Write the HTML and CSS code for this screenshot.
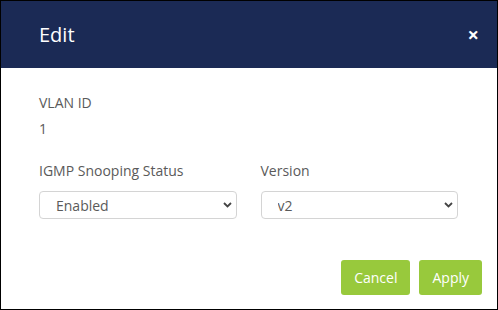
FILE: index.html
```html
<!DOCTYPE html>
<html lang="en">
<head>
    <meta charset="UTF-8">
    <link rel="stylesheet" href="styles.css">
    <title>Edit</title>
</head>
<body>
    <div class="modal">
        <div class="modal-header">
            <h2 class="modal-title">Edit</h2>
            <span class="close-button">&times;</span>
        </div>
        <div class="modal-body">
            <div class="field">
                <label>VLAN ID</label>
                <div class="value">1</div>
            </div>
            <div class="row">
                <div class="field">
                    <label for="igmp_status">IGMP Snooping Status</label>
                    <div class="select-wrap">
                        <select id="igmp_status">
                            <option>Enabled</option>
                            <option>Disabled</option>
                        </select>
                        <svg class="chevron" width="9" height="6" viewBox="0 0 9 6"><path d="M1 1l3.5 3.5L8 1" fill="none" stroke="#444" stroke-width="1.8"/></svg>
                    </div>
                </div>
                <div class="field">
                    <label for="igmp_version">Version</label>
                    <div class="select-wrap">
                        <select id="igmp_version">
                            <option>v2</option>
                            <option>v3</option>
                        </select>
                        <svg class="chevron" width="9" height="6" viewBox="0 0 9 6"><path d="M1 1l3.5 3.5L8 1" fill="none" stroke="#444" stroke-width="1.8"/></svg>
                    </div>
                </div>
            </div>
        </div>
        <div class="modal-footer">
            <button type="button">Cancel</button>
            <button type="button">Apply</button>
        </div>
    </div>
</body>
</html>
```

FILE: styles.css
```css
body {
    margin: 0;
    font-family: "Open Sans", Arial, sans-serif;
    background-color: #fff;
}
.modal {
    width: 498px;
    height: 310px;
    box-sizing: border-box;
    border: 1px solid #000;
    background-color: #fff;
}
.modal-header {
    height: 67px;
    background-color: #1b2a55;
    display: flex;
    align-items: center;
    justify-content: space-between;
    padding: 0 18px 0 38px;
}
.modal-title {
    margin: 0;
    font-size: 20px;
    font-weight: normal;
    color: #fff;
}
.close-button {
    color: #fff;
    font-size: 20px;
    font-weight: bold;
    cursor: pointer;
}
.modal-body {
    padding: 25px 39px 0 38px;
}
.field label {
    display: block;
    font-size: 14px;
    color: #5a5a5a;
    line-height: 19px;
}
.value {
    font-size: 14px;
    color: #5a5a5a;
    line-height: 19px;
    margin-top: 7px;
}
.row {
    display: grid;
    grid-template-columns: 1fr 1fr;
    gap: 24px;
    margin-top: 23px;
}
.row label {
    margin-bottom: 11px;
}
.select-wrap {
    position: relative;
}
select {
    width: 100%;
    height: 28px;
    appearance: none;
    border: 1px solid #d4d4d4;
    border-radius: 4px;
    background-color: #fff;
    padding: 0 16px;
    font-family: inherit;
    font-size: 14px;
    color: #5a5a5a;
}
.chevron {
    position: absolute;
    right: 5px;
    top: 11px;
}
.modal-footer {
    display: flex;
    justify-content: flex-end;
    gap: 9px;
    padding: 41px 15px 0 0;
}
button {
    height: 35px;
    padding: 0 13px;
    font-family: inherit;
    font-size: 14px;
    color: #fff;
    background-color: #98c93c;
    border: none;
    border-radius: 3px;
    cursor: pointer;
}
```
